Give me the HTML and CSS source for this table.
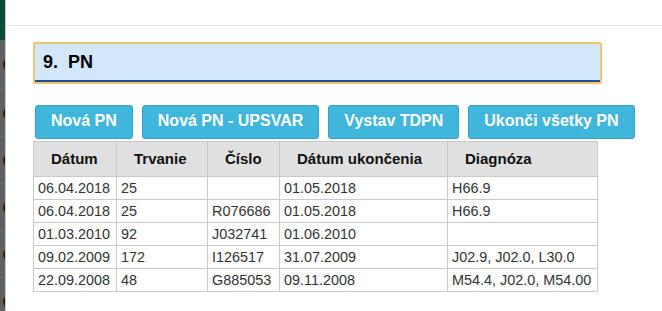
FILE: index.html
```html
<!DOCTYPE html>
<html lang="sk">
<head>
<meta charset="utf-8">
<title>PN</title>
<link rel="stylesheet" href="styles.css">
</head>
<body>
<div class="page">
  <aside class="sidebar">
    <div class="sidebar-top"></div>
    <div class="side-item first"><span class="side-dot"></span></div>
    <div class="side-item"><span class="side-dot"></span></div>
    <div class="side-item"><span class="side-dot"></span></div>
    <div class="side-item"><span class="side-dot"></span></div>
    <div class="side-item"><span class="side-dot"></span></div>
    <div class="side-item"><span class="side-dot"></span></div>
  </aside>
  <main class="main">
    <div class="topbar"></div>
    <div class="content">
      <div class="section-head">
        <div class="section-title">9.&nbsp;&nbsp;PN</div>
      </div>
      <div class="actions">
        <button class="btn">Nová PN</button>
        <button class="btn">Nová PN - UPSVAR</button>
        <button class="btn">Vystav TDPN</button>
        <button class="btn">Ukonči všetky PN</button>
      </div>
      <table class="grid">
        <colgroup>
          <col class="c1"><col class="c2"><col class="c3"><col class="c4"><col class="c5">
        </colgroup>
        <thead>
          <tr><th>Dátum</th><th>Trvanie</th><th>Číslo</th><th>Dátum ukončenia</th><th>Diagnóza</th></tr>
        </thead>
        <tbody>
          <tr><td>06.04.2018</td><td>25</td><td></td><td>01.05.2018</td><td>H66.9</td></tr>
          <tr><td>06.04.2018</td><td>25</td><td>R076686</td><td>01.05.2018</td><td>H66.9</td></tr>
          <tr><td>01.03.2010</td><td>92</td><td>J032741</td><td>01.06.2010</td><td></td></tr>
          <tr><td>09.02.2009</td><td>172</td><td>I126517</td><td>31.07.2009</td><td>J02.9, J02.0, L30.0</td></tr>
          <tr><td>22.09.2008</td><td>48</td><td>G885053</td><td>09.11.2008</td><td>M54.4, J02.0, M54.00</td></tr>
        </tbody>
      </table>
      <div class="next-section"></div>
    </div>
  </main>
</div>
</body>
</html>
```
FILE: styles.css
```css
html, body {
  margin: 0;
  padding: 0;
  background: #ffffff;
  font-family: "Liberation Sans", Arial, sans-serif;
  overflow: hidden;
}

.page {
  display: flex;
  width: 662px;
  height: 311px;
  overflow: hidden;
}

.sidebar {
  width: 5px;
  flex: 0 0 5px;
  background: #5d6162;
  border-right: 1px solid #c9cbcb;
  display: flex;
  flex-direction: column;
  overflow: hidden;
}

.sidebar-top {
  height: 40px;
  flex: 0 0 40px;
  background: #0c4a3b;
}

.side-item {
  height: 46px;
  flex: 0 0 46px;
  border-bottom: 1px solid #6a6e6f;
  display: flex;
  align-items: center;
  justify-content: flex-end;
}

.side-item.first {
  height: 49px;
  flex-basis: 49px;
}

.side-dot {
  width: 12px;
  height: 13px;
  flex: 0 0 12px;
  border-radius: 50%;
  background: #1f1d1c;
  box-shadow: inset 1px 0 0 #8a6a3a;
  margin-right: -9px;
}

.main {
  flex: 1;
  display: flex;
  flex-direction: column;
}

.topbar {
  height: 25px;
  flex: 0 0 25px;
  border-bottom: 1px solid #e4e4e4;
}

.content {
  padding: 16px 0 0 27px;
}

.section-head {
  width: 565px;
  border: 2px solid #f0c572;
  border-radius: 2px;
  background: #d2e6fc;
}

.section-title {
  height: 36px;
  line-height: 36px;
  padding-left: 8px;
  border-bottom: 2px solid #1e4f90;
  font-size: 18px;
  font-weight: bold;
  color: #000000;
}

.actions {
  display: flex;
  gap: 9px;
  padding-left: 2px;
  margin-top: 21px;
}

.btn {
  font-family: "Liberation Sans", Arial, sans-serif;
  font-size: 16px;
  font-weight: bold;
  line-height: 18px;
  color: #ffffff;
  background: #41b6dc;
  border: 1px solid #31a2c7;
  border-radius: 3px;
  padding: 6px 15px 8px;
  margin: 0;
}

.grid {
  margin-top: 2px;
  width: 564px;
  table-layout: fixed;
  border-collapse: collapse;
}

.c1 { width: 83px; }
.c2 { width: 91px; }
.c3 { width: 72px; }
.c4 { width: 168px; }
.c5 { width: 150px; }

.grid th,
.grid td {
  border: 1px solid #cacaca;
  text-align: left;
  white-space: nowrap;
}

.grid th {
  background: #e0e0e0;
  font-size: 15px;
  font-weight: bold;
  line-height: 18px;
  padding: 8px 17px;
  color: #111111;
}

.grid td {
  font-size: 14.4px;
  line-height: 18px;
  padding: 2px 4px;
  color: #333333;
}

.next-section {
  width: 463px;
  height: 20px;
  margin: 19px 0 0 -3px;
  border-top: 2px solid #d5eafb;
}
```
